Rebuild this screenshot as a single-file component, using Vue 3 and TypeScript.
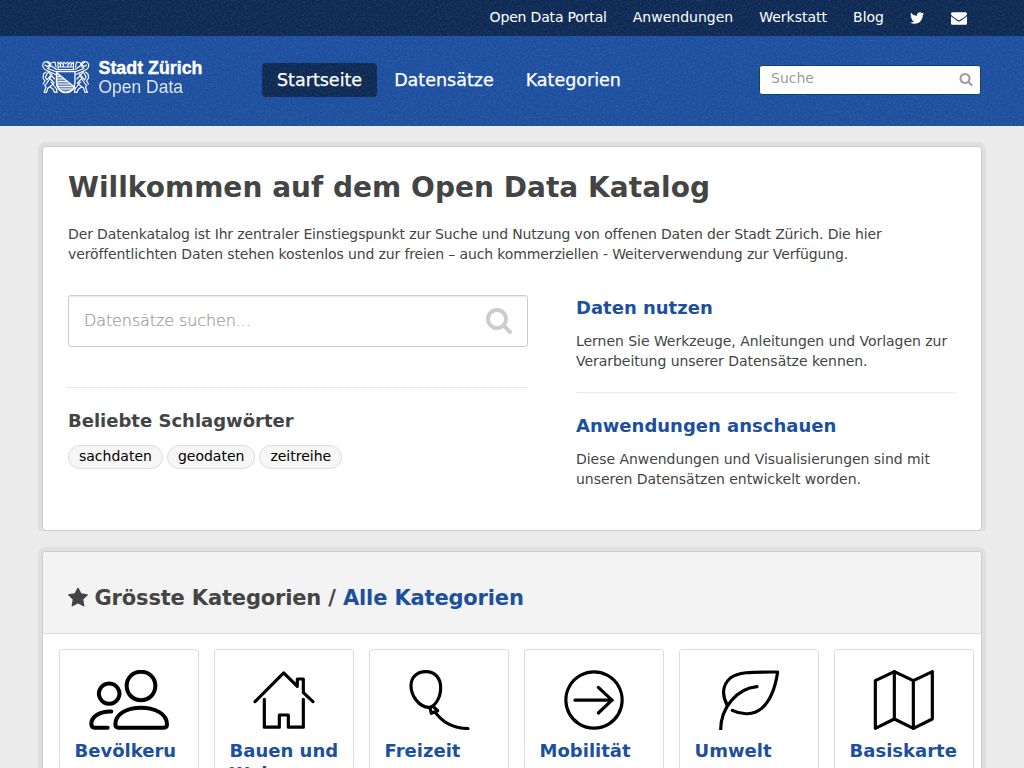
<script setup lang="ts">
interface Category {
  title: string
  viewBox: string
  stroke: number
  paths: string[]
}

const account = ['Open Data Portal', 'Anwendungen', 'Werkstatt', 'Blog']
const tags = ['sachdaten', 'geodaten', 'zeitreihe']

const searchPath =
  'M1216 832q0-185-131.5-316.5t-316.5-131.5-316.5 131.5-131.5 316.5 131.5 316.5 316.5 131.5 316.5-131.5 131.5-316.5zm512 832q0 52-38 90t-90 38q-54 0-90-38l-343-342q-179 124-399 124-143 0-273.5-55.5t-225-150-150-225-55.5-273.5 55.5-273.5 150-225 225-150 273.5-55.5 273.5 55.5 225 150 150 225 55.5 273.5q0 220-124 399l343 343q37 37 37 90z'

const left = '72 90 330 180'
const right = '537 90 330 180'

const categories: Category[] = [
  {
    title: 'Bevölkerung',
    viewBox: left,
    stroke: 12,
    paths: [
      'M177.500 130.500a30.500 30.500 0 1 0 .01 0z',
      'M273 95.500c25 0 43 18 43 42s-18 43-43 43-43-19-43-43 18-42 43-42z',
      'M206 263H342Q351 263 351 253C351 222 316 203 273 203S196 222 196 253Q196 263 206 263Z',
      'M184 214.500C150 213 124 230 124 252Q124 263 134 263H173',
    ],
  },
  {
    title: 'Bauen und Wohnen',
    viewBox: right,
    stroke: 9.5,
    paths: ['M615 185L701 98.500L742 139V117H760V158L789 185', 'M643 178V261.500H688V225H715V261.500H760V178'],
  },
  {
    title: 'Freizeit',
    viewBox: left,
    stroke: 9.5,
    paths: [
      'M198 95C225 95 242 115 242 143C242 175 223 202 206 202C180 202 153 170 153 137C153 112 170 95 198 95Z',
      'M210 203L214 220L233 212L221 201',
      'M226 217C250 250 280 265 324 265.500',
    ],
  },
  {
    title: 'Mobilität',
    viewBox: right,
    stroke: 9.5,
    paths: ['M702 95.500a84.500 84.500 0 1 0 .01 0z', 'M645 180.500H756', 'M715 142L756 180.500L715 219'],
  },
  {
    title: 'Umwelt',
    viewBox: left,
    stroke: 9.5,
    paths: [
      'M172 196C155 167 157 135 180 115C205 95 245 96 323 96C315 150 298 185 275 205C250 226 215 225 187 211',
      'M152 270C152 205 200 145 261 140',
    ],
  },
  {
    title: 'Basiskarten',
    viewBox: right,
    stroke: 9.5,
    paths: ['M616 122L673 95L730 122L787 95V237L730 265L673 237L616 265Z', 'M673 95V237M730 122V265'],
  },
]
</script>

<template>
  <div class="page">
    <div class="masthead">
      <div class="topbar">
        <nav class="account">
          <a v-for="item in account" :key="item">{{ item }}</a>
          <a class="icon-link">
            <svg width="15" height="16" viewBox="100 0 1680 1792">
              <path
                d="M1684 408q-67 98-162 167 1 14 1 42 0 130-38 259.5t-115.5 248.5-184.5 210.500-258 146-323 54.500q-271 0-496-145 35 4 78 4 225 0 401-138-105-2-188-64.500t-114-159.500q33 5 61 5 43 0 85-11-112-23-185.500-111.500t-73.500-205.500v-4q68 38 146 41-66-44-105-115t-39-154q0-88 44-163 121 149 294.500 238.500t371.500 99.500q-8-38-8-74 0-134 94.500-228.500t228.500-94.500q140 0 236 102 109-21 205-78-37 115-142 178 93-10 186-50z"
              />
            </svg>
          </a>
          <a class="icon-link">
            <svg width="16" height="16" viewBox="0 0 1792 1792">
              <path
                d="M1792 710v794q0 66-47 113t-113 47h-1472q-66 0-113-47t-47-113v-794q44 49 101 87 362 246 497 345 57 42 92.500 65.500t94.500 48 110 24.500h2q51 0 110-24.500t94.500-48 92.500-65.500q170-123 498-345 57-39 100-87zm0-294q0 79-49 151t-122 123q-376 261-468 325-10 7-42.500 31t-54 38.500-52 32.500-57.500 27-50 9h-2q-23 0-50-9t-57.500-27-52-32.500-54-38.500-42.500-31q-91-64-262-182.500t-205-142.500q-62-42-117-115.500t-55-136.500q0-78 41.500-130t118.500-52h1472q65 0 112.500 47t47.500 113z"
              />
            </svg>
          </a>
        </nav>
      </div>
      <header class="header">
        <svg class="logo" width="164" height="40" viewBox="0 0 164 40">
          <g fill="none" stroke="#fff" stroke-linecap="round" stroke-linejoin="round">
            <path stroke-width="1.100" d="M16 2.500V9.500H31.500V2.500M16 2L17.500 4L19 2L20.500 4L22 2L23.700 4L25.400 2L27 4L28.500 2L30 4L31.500 2M16 7H31.500M18.500 4V7M21.300 4V7M26 4V7M29 4V7" />
            <path stroke-width="1.300" d="M14.500 11.500H33V22C33 29 28 32.600 23.700 32.600S14.500 29 14.500 22Z" />
            <path fill="#fff" fill-opacity="0.35" stroke-width="1.200" d="M14.500 12.500L33 27.500C30 31 27 32.500 23.700 32.500C18 32 14.500 28 14.500 22Z" />
            <path stroke-width="0.900" d="M15 16.500H19M15 19H22M15 21.500H25M15.500 24H28M16.500 26.500H31M18 29H29.500" />
            <g id="lion" stroke-width="1.150">
              <path d="M7 2C3 .5 .5 3 .8 6C1 9 3.500 10 6 11L13.500 14.500" />
              <path d="M3 5L5 6.500L8 5L6 3M5 2.500L9 3L8.500 6L5.500 8.500L13.500 11.500" />
              <path d="M9.500 6L14.500 9.500M10 2.500L13 2L14 7" />
              <path d="M4 12L1.500 14L1 18L3 21L1 24M5.500 13L3.500 17L5 20L8 16M6 11.500L12.500 19M10 14L7 20L3.500 25" />
              <path d="M8.500 19L12 23L10 25L6 28L4.500 32.300H2.200L4 27L2.500 25M9 22L14.500 29L15 32.300H12.500L11 29L8 27" />
            </g>
            <use href="#lion" transform="translate(47.500 0) scale(-1 1)" />
          </g>
          <text class="logo-bold" x="56.500" y="14" textLength="104" lengthAdjust="spacingAndGlyphs">Stadt Zürich</text>
          <text class="logo-light" x="56.500" y="32.500" textLength="84.500" lengthAdjust="spacingAndGlyphs">Open Data</text>
        </svg>
        <nav class="main-nav">
          <a class="active">Startseite</a>
          <a>Datensätze</a>
          <a>Kategorien</a>
        </nav>
        <div class="site-search">
          <span>Suche</span>
          <svg width="14" height="14" viewBox="0 0 1792 1792"><path :d="searchPath" /></svg>
        </div>
      </header>
      <svg class="grain" width="1024" height="126">
        <filter id="grain" x="0" y="0" width="100%" height="100%">
          <feTurbulence type="fractalNoise" baseFrequency="0.55" numOctaves="2" stitchTiles="stitch" />
          <feColorMatrix values="0 0 0 0 1  0 0 0 0 1  0 0 0 0 1  0.2 0 0 0 -0.085" />
        </filter>
        <rect width="1024" height="126" filter="url(#grain)" />
      </svg>
    </div>

    <main>
      <div class="frame">
        <section class="box intro">
          <h1>Willkommen auf dem Open Data Katalog</h1>
          <p class="lead">
            Der Datenkatalog ist Ihr zentraler Einstiegspunkt zur Suche und Nutzung von offenen Daten der Stadt Zürich. Die hier
            veröffentlichten Daten stehen kostenlos und zur freien – auch kommerziellen - Weiterverwendung zur Verfügung.
          </p>
          <div class="columns">
            <div class="col-search">
              <div class="big-search">
                <span>Datensätze suchen...</span>
                <svg width="28" height="28" viewBox="0 0 1792 1792"><path :d="searchPath" /></svg>
              </div>
              <div class="tags">
                <h3>Beliebte Schlagwörter</h3>
                <div class="tag-list">
                  <a v-for="tag in tags" :key="tag">{{ tag }}</a>
                </div>
              </div>
            </div>
            <div class="col-info">
              <article>
                <h3>Daten nutzen</h3>
                <p>Lernen Sie Werkzeuge, Anleitungen und Vorlagen zur Verarbeitung unserer Datensätze kennen.</p>
              </article>
              <article>
                <h3>Anwendungen anschauen</h3>
                <p>Diese Anwendungen und Visualisierungen sind mit unseren Datensätzen entwickelt worden.</p>
              </article>
            </div>
          </div>
        </section>
      </div>

      <div class="frame">
        <section class="box">
          <div class="box-head">
            <svg width="21.500" height="21.500" viewBox="64 0 1792 1792">
              <path
                d="M1728 647q0 22-26 48l-363 354 86 500q1 7 1 20 0 21-10.500 35.500t-30.500 14.500q-19 0-40-12l-449-236-449 236q-22 12-40 12-21 0-31.500-14.500t-10.500-35.500q0-6 2-20l86-500-364-354q-25-27-25-48 0-37 56-46l502-73 225-455q19-41 49-41t49 41l225 455 502 73q56 9 56 46z"
              />
            </svg>
            <h2>Grösste Kategorien / <a>Alle Kategorien</a></h2>
          </div>
          <ul class="grid">
            <li v-for="c in categories" :key="c.title">
              <svg width="110" height="60" :viewBox="c.viewBox" :stroke-width="c.stroke">
                <path v-for="(d, i) in c.paths" :key="i" :d="d" />
              </svg>
              <h3>{{ c.title }}</h3>
            </li>
          </ul>
        </section>
      </div>
    </main>
  </div>
</template>

<style>
body {
  background: #ebebeb;
  overflow: hidden;
}
</style>

<style scoped>
.page {
  height: 768px;
  overflow: hidden;
  background: #ebebeb;
  font: 400 14px/20px "DejaVu Sans", sans-serif;
  color: #444;
}
h1, h2, h3, p, ul {
  margin: 0;
  padding: 0;
}
.masthead {
  position: relative;
  color: #fff;
}
.grain {
  position: absolute;
  inset: 0;
  pointer-events: none;
}
.topbar {
  height: 36px;
  background: #0e2a54;
}
.account {
  display: flex;
  justify-content: flex-end;
  padding-right: 44px;
}
.account a {
  padding: 7px 13px 9px;
}
.account a:first-child {
  letter-spacing: -0.17px;
}
.account .icon-link {
  display: flex;
  align-items: center;
  padding-top: 8px;
  padding-bottom: 8px;
}
.account svg {
  display: block;
  fill: #fff;
}
.header {
  display: flex;
  height: 90px;
  padding: 0 43px 0 42px;
  background: #1d4f9f;
}
.logo {
  margin-top: 24px;
}
.logo text {
  fill: #fff;
  font-family: "Liberation Sans", sans-serif;
}
.logo .logo-bold {
  font-size: 17.5px;
  font-weight: 700;
  stroke: #fff;
  stroke-width: 0.35px;
}
.logo .logo-light {
  font-size: 18.5px;
  font-weight: 400;
  opacity: 0.85;
}
.main-nav {
  display: flex;
  gap: 2px;
  margin: 27px 0 0 56px;
}
.main-nav a {
  height: 34px;
  padding: 0 15px;
  border-radius: 4px;
  font-size: 17.5px;
  font-weight: 400;
  line-height: 34px;
  -webkit-text-stroke: 0.25px #fff;
}
.main-nav .active {
  background: #0e2a54;
}
.site-search {
  display: flex;
  justify-content: space-between;
  box-sizing: border-box;
  width: 222px;
  height: 30px;
  margin: 29px 0 0 auto;
  padding: 2px 7px 0 11px;
  border: 1px solid #03475f;
  border-radius: 3px;
  background: #fff;
  color: #999;
}
.site-search svg {
  margin-top: 4px;
  fill: #999;
}
main {
  display: flex;
  flex-direction: column;
  gap: 16px;
  padding: 16px 38px 0;
}
.frame {
  overflow: hidden;
  padding: 4px 4px 0;
}
.box {
  box-sizing: border-box;
  width: 940px;
  border: 1px solid #ccc;
  border-radius: 4px;
  background: #fff;
  box-shadow: 0 0 0 4px rgba(0, 0, 0, 0.05);
}
.intro {
  height: 385px;
  padding: 24px 25px 0;
}
h1 {
  font-size: 28px;
  line-height: 34px;
  letter-spacing: 0.03px;
}
.lead {
  width: 860px;
  margin-top: 19px;
  letter-spacing: -0.13px;
}
.columns {
  display: flex;
  gap: 48px;
  margin-top: 31px;
}
.col-search {
  width: 460px;
}
.big-search {
  display: flex;
  justify-content: space-between;
  align-items: center;
  box-sizing: border-box;
  height: 52px;
  padding: 0 14px 0 15px;
  border: 1px solid #ccc;
  border-radius: 3px;
  box-shadow: inset 0 1px 1px rgba(0, 0, 0, 0.075);
  color: #999;
  font-size: 16px;
  font-weight: 300;
  letter-spacing: -0.1px;
  -webkit-text-stroke: 0.2px #999;
}
.big-search svg {
  margin-bottom: 2px;
  fill: #ccc;
}
.tags {
  margin-top: 40px;
  padding-top: 20px;
  border-top: 1px dotted #ddd;
}
h3 {
  font-size: 18px;
  line-height: 26px;
}
.tag-list {
  display: flex;
  gap: 4px;
  margin-top: 11px;
}
.tag-list a {
  padding: 0 10px 2px;
  border: 1px solid #ddd;
  border-radius: 100px;
  background: #f6f6f6;
  color: #000;
}
.col-info {
  width: 380px;
}
.col-info h3,
.box-head a,
.grid h3 {
  color: #1d4f9f;
}
.col-info p {
  margin-top: 10px;
  letter-spacing: -0.04px;
}
.col-info article + article {
  margin-top: 21px;
  padding-top: 20px;
  border-top: 1px dotted #ddd;
}
.box-head {
  display: flex;
  align-items: center;
  gap: 5px;
  height: 71px;
  padding: 10px 25px 0;
  border-bottom: 1px solid #ddd;
  border-radius: 3px 3px 0 0;
  background: #f3f3f3;
}
.box-head svg {
  fill: #444;
}
h2 {
  font-size: 21px;
  line-height: 28px;
  letter-spacing: -0.16px;
}
.grid {
  display: flex;
  gap: 15px;
  padding: 15px 16px;
  list-style: none;
}
.grid li {
  flex: none;
  box-sizing: border-box;
  width: 140px;
  height: 170px;
  padding: 20px 14px;
  border: 1px solid #ddd;
  border-radius: 3px;
  overflow: hidden;
}
.grid svg {
  display: block;
  fill: none;
  stroke: #000;
  stroke-linecap: round;
  stroke-linejoin: round;
}
.grid h3 {
  margin: 9px -1px 0 0.6px;
  line-height: 23.4px;
  overflow-wrap: anywhere;
}
</style>
